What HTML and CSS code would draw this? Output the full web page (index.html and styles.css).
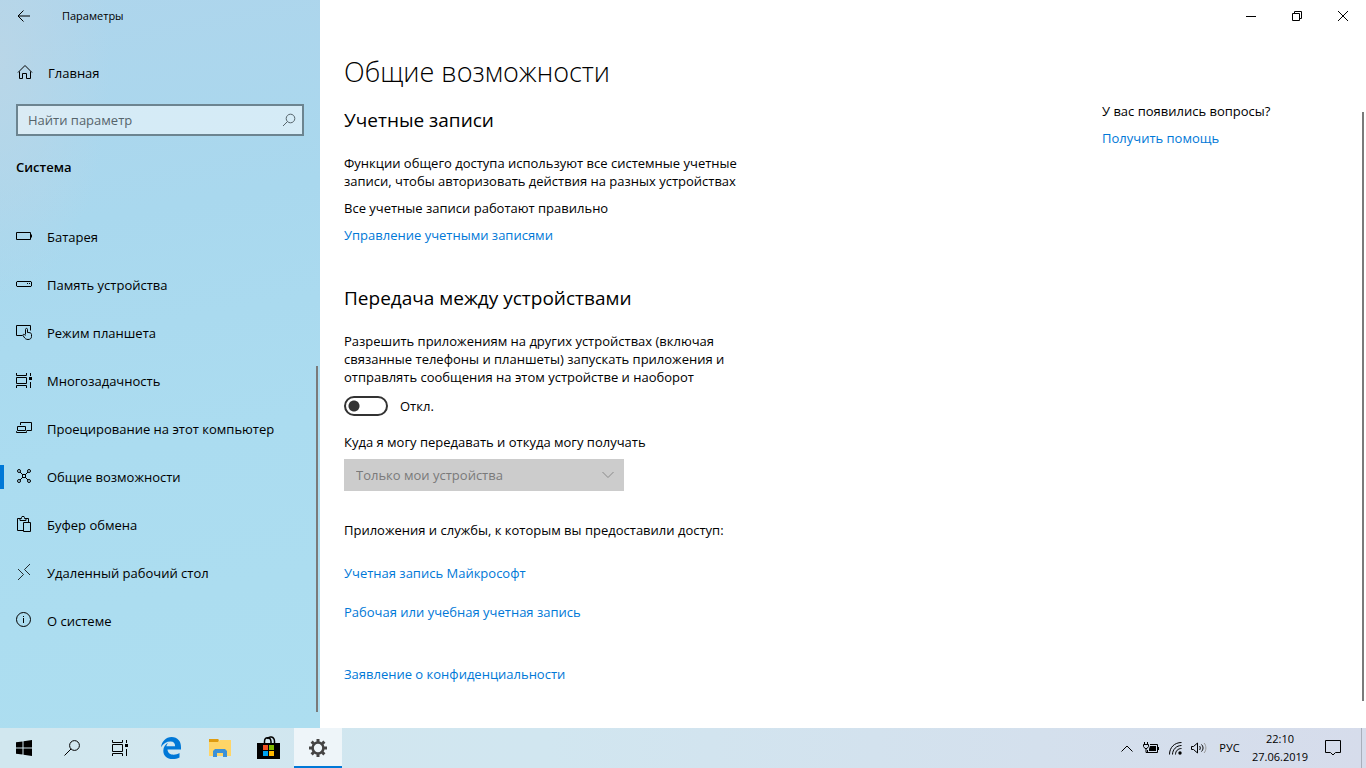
FILE: index.html
```html
<!DOCTYPE html>
<html lang="ru">
<head>
    <meta charset="UTF-8">
    <meta name="viewport" content="width=device-width, initial-scale=1.0">
    <title>Параметры</title>
    <link rel="stylesheet" href="styles.css">
</head>
<body>
    <div class="window">
        <!-- Sidebar -->
        <aside class="sidebar">
            <div class="title-bar">
                <button class="back" aria-label="Назад">
                    <svg width="14" height="12" viewBox="0 0 14 12"><path d="M6.500 .5L1 6l5.500 5.500M1 6h12"/></svg>
                </button>
                <span class="app-title">Параметры</span>
            </div>
            <a class="home" href="#">
                <svg width="16" height="16" viewBox="0 0 16 16"><path d="M1 8.500L8 1.500l7 7M2.500 7.500v7h3v-5h4v5h4v-7"/></svg>
                Главная
            </a>
            <div class="search">
                <input type="text" id="search" placeholder="Найти параметр" aria-label="Найти параметр">
                <svg width="14" height="14" viewBox="0 0 14 14"><circle cx="8.500" cy="5.500" r="4.300"/><path d="M5.500 8.500L1 13"/></svg>
            </div>
            <h3>Система</h3>
            <nav>
                <a class="nav-item" href="#">
                    <svg width="16" height="16" viewBox="0 0 16 16"><path d="M.5 4.500h14v7H.5zM15.500 6.500v3"/></svg>
                    Батарея
                </a>
                <a class="nav-item" href="#">
                    <svg width="16" height="16" viewBox="0 0 16 16"><path d="M1 5.500h14l.5.500v4l-.5.500H1l-.5-.500V6zM11 7.500h1M13 7.500h1"/></svg>
                    Память устройства
                </a>
                <a class="nav-item" href="#">
                    <svg width="16" height="16" viewBox="0 0 16 16"><path d="M6.500 11.500h-6v-10h14v5M9.500 10.500v-5c0-1.500 2-1.500 2 0v3c2 0 4 .2 4 2v2c0 2-1.500 3-3.500 3s-3-1-4-2.500l-1-1.500c-.5-1.500 1.500-1.500 2.500 0"/></svg>
                    Режим планшета
                </a>
                <a class="nav-item" href="#">
                    <svg width="16" height="16" viewBox="0 0 16 16"><path d="M.5 1v2.500h10V1M.5 5.500h10v6H.5zM.5 16v-2.500h10V16M14.500 1v3M14.500 10v6"/><path class="solid" d="M13 5h3v3h-3z"/></svg>
                    Многозадачность
                </a>
                <a class="nav-item" href="#">
                    <svg width="16" height="16" viewBox="0 0 16 16"><path d="M4.500 5V2.500h11v8h-5M1.500 10V6.500h8V10M.5 12.500h10v-1l-1-1h-8l-1 1z"/></svg>
                    Проецирование на этот компьютер
                </a>
                <a class="nav-item active" href="#">
                    <svg width="16" height="16" viewBox="0 0 16 16"><path d="M4 4l3 3M12 4L9 7M4 12l3-3M12 12L9 9"/><path d="M6.500 6.500h3v3h-3z"/><circle cx="3" cy="3" r="1.500"/><circle cx="13" cy="3" r="1.500"/><circle cx="3" cy="13" r="1.500"/><circle cx="13" cy="13" r="1.500"/></svg>
                    Общие возможности
                </a>
                <a class="nav-item" href="#">
                    <svg width="16" height="16" viewBox="0 0 16 16"><path d="M7 14.500H1.500v-12H4M10 2.500h2.500V6M4 4.500h6v-2H8.500V1.500L8 .500H6l-.5 1v1H4zM7.500 6.500h7v9h-7z"/></svg>
                    Буфер обмена
                </a>
                <a class="nav-item" href="#">
                    <svg width="16" height="16" viewBox="0 0 16 16"><path class="thin" d="M2 5l5.500 5.500L2 16M14 0L8.500 5.500 14 11"/></svg>
                    Удаленный рабочий стол
                </a>
                <a class="nav-item" href="#">
                    <svg width="16" height="16" viewBox="0 0 16 16"><circle cx="7.500" cy="7.500" r="7"/><path d="M7.500 6v5M7.500 4v1"/></svg>
                    О системе
                </a>
            </nav>
            <div class="scroll-thumb"></div>
        </aside>

        <!-- Page -->
        <main class="page">
            <div class="window-buttons">
                <button aria-label="Свернуть"><svg width="10" height="10" viewBox="0 0 10 10"><path d="M0 5.500h10"/></svg></button>
                <button aria-label="Восстановить"><svg width="10" height="10" viewBox="0 0 10 10"><path d="M.5 2.500h7v7h-7zM2.500 2V.5h7v7H8"/></svg></button>
                <button aria-label="Закрыть"><svg width="10" height="10" viewBox="0 0 10 10"><path d="M0 0l10 10M10 0L0 10"/></svg></button>
            </div>
            <div class="page-body">
                <div class="content">
                    <h1>Общие возможности</h1>
                    <section>
                        <h2>Учетные записи</h2>
                        <p>Функции общего доступа используют все системные учетные записи, чтобы авторизовать действия на разных устройствах</p>
                        <p>Все учетные записи работают правильно</p>
                        <a href="#">Управление учетными записями</a>
                    </section>
                    <section>
                        <h2>Передача между устройствами</h2>
                        <p>Разрешить приложениям на других устройствах (включая связанные телефоны и планшеты) запускать приложения и отправлять сообщения на этом устройстве и наоборот</p>
                        <label class="toggle"><input type="checkbox">Откл.</label>
                        <label class="field-label" for="devices">Куда я могу передавать и откуда могу получать</label>
                        <div class="select">
                            <select id="devices" disabled>
                                <option>Только мои устройства</option>
                            </select>
                            <svg width="12" height="8" viewBox="0 0 12 8"><path d="M.5 1L6 6.500 11.500 1"/></svg>
                        </div>
                    </section>
                    <section class="access">
                        <p>Приложения и службы, к которым вы предоставили доступ:</p>
                        <a href="#">Учетная запись Майкрософт</a>
                        <a href="#">Рабочая или учебная учетная запись</a>
                    </section>
                    <a class="privacy" href="#">Заявление о конфиденциальности</a>
                </div>
                <div class="help">
                    <p>У вас появились вопросы?</p>
                    <a href="#">Получить помощь</a>
                </div>
            </div>
            <div class="scroll-thumb"></div>
        </main>
    </div>

    <!-- Taskbar -->
    <footer class="taskbar">
        <div class="task-group">
            <button aria-label="Пуск"><svg class="fill" width="16" height="16" viewBox="0 0 16 16"><path d="M0 2.300L6.500 1.400v6.100H0zM7.500 1.200L16 0v7.500H7.500zM0 8.500h6.500v6.100L0 13.700zM7.500 8.500H16V16l-8.500-1.200z"/></svg></button>
            <button aria-label="Поиск"><svg width="16" height="16" viewBox="0 0 16 16"><circle cx="10.500" cy="5.500" r="4.900"/><path d="M7 9L.5 15.500"/></svg></button>
            <button aria-label="Представление задач"><svg width="16" height="16" viewBox="0 0 16 16"><path d="M.5 0v2.500h10V0M.5 4.500h10v7H.5zM.5 16v-2.500h10V16M14.500 0v3M14.500 9v7"/><path class="solid" d="M13 4h3v3h-3z"/></svg></button>
        </div>
        <div class="apps">
            <button aria-label="Edge"><svg class="fill" width="20" height="22" viewBox="0 0 20 22"><path fill="#0078d7" d="M0 10.200C.8 4.300 4.800 0 10.600 0 16.700 0 20 4.400 20 10v2.600H6.500c.2 3.500 3 5.200 6.100 5.200 2.200 0 4.100-.6 5.900-1.700v4.300c-2 1.100-4.500 1.600-6.900 1.600-5.700 0-9.300-3.300-9.300-8.300 0-3.600 2-6.400 5-7.900-1.100 1-1.600 2.200-1.900 3.500h8.700c0-3-1.500-4.700-4.500-4.700C5.500 4.600 2.300 6.600 0 10.200z"/></svg></button>
            <button aria-label="Проводник"><svg class="fill" width="22" height="18" viewBox="0 0 22 18"><path fill="#ffd567" d="M0 2h10l1-1h11v16H0z"/><path fill="#df9c10" d="M0 0h9l1 1-1 2H0z"/><path fill="#3c91d7" d="M4 18v-6l2-2h10l2 2v6h-4v-4H8v4z"/></svg></button>
            <button aria-label="Магазин"><svg class="fill" width="24" height="24" viewBox="0 0 24 24"><path d="M0 7h23v16H0z"/><path fill="none" stroke="#000" stroke-width="1.500" d="M7.500 8V5.500c0-5 6-5 6.500 0V8M10.500 3c1-3 7-3 7 2.500V8"/><path fill="#f25022" d="M6 9h5v5H6z"/><path fill="#7fba00" d="M12 9h5v5h-5z"/><path fill="#00a4ef" d="M6 15h5v5H6z"/><path fill="#ffb900" d="M12 15h5v5h-5z"/></svg></button>
            <button class="running" aria-label="Параметры"><svg width="18" height="18" viewBox="0 0 18 18"><circle class="gear-ring" cx="9" cy="9" r="5.400"/><path class="gear-teeth" d="M9 0v3M9 15v3M0 9h3M15 9h3M2.600 2.600l2.200 2.200M13.200 13.200l2.200 2.200M2.600 15.400l2.200-2.200M13.200 4.800l2.200-2.200"/></svg></button>
        </div>
        <div class="tray">
            <button aria-label="Скрытые значки"><svg width="12" height="7" viewBox="0 0 12 7"><path d="M.5 6.500L6 1l5.500 5.500"/></svg></button>
            <button aria-label="Батарея"><svg width="16" height="12" viewBox="0 0 16 12"><path d="M1.500 0v2M4.500 0v2M.5 2.500h5v2l-1.500 2H2l-1.500-2zM3 6v4.500h2M7 2.500h7.500v8h-10V8M15.500 5v3"/><path class="solid" d="M7 4h6v5H6V7z"/></svg></button>
            <button aria-label="Сеть"><svg width="13" height="13" viewBox="0 0 13 13"><path d="M.5 12.500c0-7 5-12 12-12M3.500 12.500c0-5 4-9 9-9M6.500 12.500c0-3.500 2.500-6 6-6"/><circle class="solid" cx="11" cy="11" r="1.700"/></svg></button>
            <button aria-label="Громкость"><svg width="16" height="12" viewBox="0 0 16 12"><path d="M.5 4.500h2L6.500 1v10l-4-3.500h-2zM8.500 4c1 1 1 3 0 4M10.500 2.500c2 2 2 5 0 7"/><path class="muted" d="M13 1c2.500 2.500 2.500 7.500 0 10"/></svg></button>
            <button class="lang">РУС</button>
            <button class="clock"><span>22:10</span><span>27.06.2019</span></button>
            <button class="notify" aria-label="Уведомления"><svg width="16" height="16" viewBox="0 0 16 16"><path d="M.5 .5h15v12h-5L8 15l-2.500-2.500h-5z"/></svg></button>
            <div class="show-desktop"></div>
        </div>
    </footer>
</body>
</html>
```
FILE: styles.css
```css
* {
    margin: 0;
    padding: 0;
    box-sizing: border-box;
}

body {
    display: flex;
    flex-direction: column;
    height: 100vh;
    overflow: hidden;
    font-family: "Segoe UI", "Open Sans", "Noto Sans", sans-serif;
    font-size: 13px;
    line-height: 18px;
    color: #000;
    background: #fff;
}

a {
    color: #0078d7;
    text-decoration: none;
}

button {
    border: none;
    background: none;
    font: inherit;
    color: inherit;
}

svg {
    flex-shrink: 0;
    fill: none;
    stroke: #000;
}

svg.fill {
    fill: #000;
    stroke: none;
}

svg .solid {
    fill: #000;
    stroke: none;
}

svg .thin {
    stroke-width: 0.8;
}

svg .muted {
    stroke: #999;
}

.window {
    display: flex;
    flex: 1;
    min-height: 0;
}

/* Sidebar */
.sidebar {
    position: relative;
    width: 320px;
    flex-shrink: 0;
    background: radial-gradient(ellipse 110px 240px at 0 60px, rgba(186, 214, 231, 0.9), rgba(172, 214, 236, 0)),
                linear-gradient(170deg, #aed5ec 0, #a9d8ee 30%, #abdcf0 60%, #addef0 100%);
}

.title-bar {
    display: flex;
    align-items: center;
    height: 32px;
    font-size: 11px;
}

.back {
    display: flex;
    justify-content: center;
    align-items: center;
    width: 48px;
    height: 32px;
}

.app-title {
    padding-left: 14px;
}

.home {
    display: flex;
    align-items: center;
    gap: 15px;
    height: 42px;
    margin-top: 20px;
    padding-left: 17px;
    color: #000;
}

.search {
    display: flex;
    align-items: center;
    height: 32px;
    margin: 10px 16px 0;
    padding: 0 6px 0 10px;
    border: 2px solid #6c8490;
    background: rgba(255, 255, 255, 0.5);
}

.search input {
    flex: 1;
    min-width: 0;
    border: none;
    outline: none;
    background: none;
    font: inherit;
}

.search input::placeholder {
    color: #56646b;
    opacity: 1;
}

.search svg {
    stroke: #56646b;
}

.sidebar h3 {
    padding: 22px 16px 20px;
    font-size: 13px;
    line-height: 18px;
    font-weight: 600;
}

.sidebar nav {
    padding-top: 17px;
}

.nav-item {
    display: flex;
    align-items: center;
    gap: 15px;
    height: 48px;
    padding-left: 16px;
    color: #000;
}

.home svg,
.nav-item svg {
    margin-bottom: 2px;
}

.nav-item.active {
    background: linear-gradient(#0078d7, #0078d7) left center / 4px 24px no-repeat;
}

.scroll-thumb {
    position: absolute;
    right: 2px;
    width: 2px;
    background: #7a7a7a;
}

.sidebar .scroll-thumb {
    top: 366px;
    bottom: 16px;
}

/* Page */
.page {
    position: relative;
    flex: 1;
    min-width: 0;
}

.page .scroll-thumb {
    top: 112px;
    bottom: 27px;
}

.window-buttons {
    display: flex;
    justify-content: flex-end;
}

.window-buttons button {
    display: flex;
    justify-content: center;
    align-items: center;
    width: 46px;
    height: 32px;
}

.page-body {
    display: flex;
    justify-content: space-between;
    padding-left: 24px;
}

.content {
    width: 400px;
}

.content a {
    display: block;
}

h1 {
    padding-top: 20px;
    font-size: 27px;
    line-height: 40px;
    font-weight: 300;
    white-space: nowrap;
}

h2 {
    margin-bottom: 20px;
    font-size: 19px;
    line-height: 28px;
    font-weight: 400;
}

section {
    padding-top: 14px;
    margin-bottom: 26px;
}

section p {
    margin-bottom: 9px;
}

.toggle {
    display: flex;
    align-items: center;
    gap: 12px;
    height: 20px;
    margin-top: 10px;
}

.toggle input {
    appearance: none;
    width: 44px;
    height: 20px;
    border: 2px solid #333;
    border-radius: 10px;
    background: radial-gradient(circle at 8px 8px, #333 5px, transparent 6px);
}

.field-label {
    display: block;
    margin: 17px 0 8px;
}

.select {
    display: flex;
    align-items: center;
    width: 280px;
    height: 32px;
    padding: 0 10px 0 12px;
    background: #ccc;
}

.select select {
    appearance: none;
    flex: 1;
    border: none;
    background: none;
    font: inherit;
    color: #7a7a7a;
    opacity: 1;
}

.select svg {
    stroke: #8a8a8a;
}

.access {
    padding-top: 4px;
}

.access p {
    margin-bottom: 25px;
}

.access a + a {
    margin-top: 21px;
}

.privacy {
    margin-top: 44px;
}

.help {
    width: 264px;
    padding-top: 70px;
}

.help p {
    margin-bottom: 9px;
}

/* Taskbar */
.taskbar {
    display: flex;
    height: 40px;
    background: linear-gradient(90deg, #d1e7ef, #d1e6f0 40%, #d6dceb);
}

.task-group,
.apps,
.tray {
    display: flex;
}

.apps {
    gap: 1px;
    padding-left: 3px;
}

.taskbar button {
    display: flex;
    justify-content: center;
    align-items: center;
}

.task-group button,
.apps button {
    width: 48px;
}

.apps .running {
    border-top: 2px solid transparent;
    border-bottom: 2px solid #0078d7;
    background: #eef5f9;
    background-clip: border-box;
}

.gear-ring {
    stroke: #444;
    stroke-width: 2.5;
}

.gear-teeth {
    stroke: #444;
    stroke-width: 3;
}

.tray {
    margin-left: auto;
    font-size: 11px;
}

.tray button {
    width: 24px;
}

.tray .lang {
    width: 37px;
}

.tray .clock {
    flex-direction: column;
    width: 64px;
}

.tray .notify {
    width: 42px;
}

.show-desktop {
    width: 5px;
    margin-left: 7px;
    border-left: 1px solid #a9afbb;
}
```
